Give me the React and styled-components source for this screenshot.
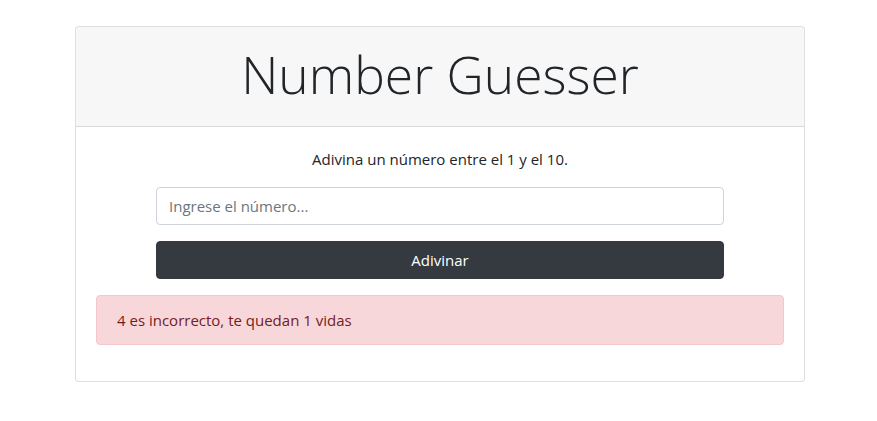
import React, { useState } from 'react';
import styled, { createGlobalStyle } from 'styled-components';

const GlobalStyle = createGlobalStyle`
  * { box-sizing: border-box; }
  body {
    margin: 0;
    font-family: "Open Sans", "Noto Sans", sans-serif;
    font-size: 15px;
    line-height: 24px;
    color: #212529;
    background: #fff;
  }
`;

const Page = styled.div`
  padding-top: 26px;
  padding-left: 75px;
`;

const Card = styled.div`
  width: 730px;
  border: 1px solid rgba(0, 0, 0, 0.125);
  border-radius: 4px;
  background: #fff;
  overflow: hidden;
`;

const CardHeader = styled.div`
  padding: 12px 20px;
  background: rgba(0, 0, 0, 0.03);
  border-bottom: 1px solid rgba(0, 0, 0, 0.125);
  text-align: center;
`;

const Title = styled.h1`
  margin: 2px 0 6px;
  font-size: 51.5px;
  font-weight: 300;
  line-height: 67.2px;
  color: #212529;
`;

const CardBody = styled.div`
  padding: 20px;
`;

const Lead = styled.p`
  margin: 0 0 16px;
  text-align: center;
`;

const Form = styled.form`
  width: 568px;
  margin: 0 auto;
  display: flex;
  flex-direction: column;
  gap: 16px;
`;

const Input = styled.input`
  height: 38px;
  padding: 6px 12px;
  font: inherit;
  color: #495057;
  border: 1px solid #ced4da;
  border-radius: 4px;
  &::placeholder { color: #6c757d; }
`;

const Button = styled.button`
  height: 38px;
  font: inherit;
  color: #fff;
  background: #343a40;
  border: 1px solid #343a40;
  border-radius: 4px;
`;

const Alert = styled.div`
  margin: 16px 0;
  padding: 12px 20px;
  color: #721c24;
  background: #f8d7da;
  border: 1px solid #f5c6cb;
  border-radius: 4px;
`;

export default function App() {
  const [value, setValue] = useState('');
  return (
    <Page>
      <GlobalStyle />
      <Card>
        <CardHeader>
          <Title>Number Guesser</Title>
        </CardHeader>
        <CardBody>
          <Lead>Adivina un número entre el 1 y el 10.</Lead>
          <Form onSubmit={(e) => e.preventDefault()}>
            <Input
              type="number"
              placeholder="Ingrese el número..."
              value={value}
              onChange={(e) => setValue(e.target.value)}
            />
            <Button type="submit">Adivinar</Button>
          </Form>
          <Alert>4 es incorrecto, te quedan 1 vidas</Alert>
        </CardBody>
      </Card>
    </Page>
  );
}
